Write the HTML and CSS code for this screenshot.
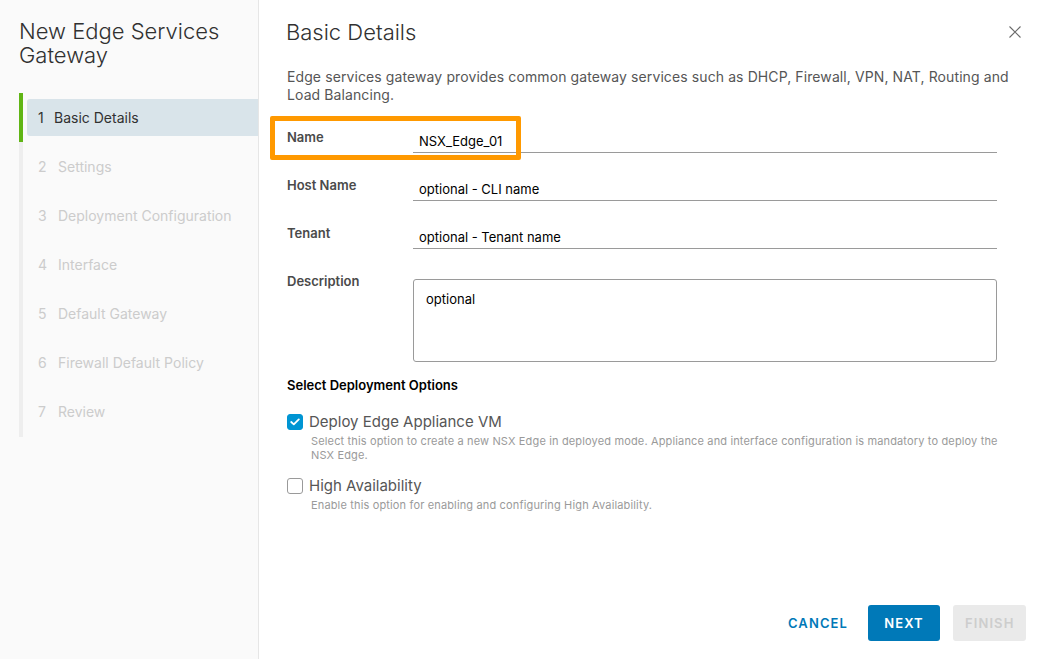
FILE: index.html
```html
<!DOCTYPE html>
<html>
<head>
<meta charset="utf-8">
<link rel="stylesheet" href="styles.css">
</head>
<body>
<div class="wizard">
  <aside class="sidebar">
    <h1 class="wiz-title">New Edge Services Gateway</h1>
    <ol class="steps">
      <li class="step active"><span class="num">1</span><span class="label">Basic Details</span></li>
      <li class="step"><span class="num">2</span><span class="label">Settings</span></li>
      <li class="step"><span class="num">3</span><span class="label">Deployment Configuration</span></li>
      <li class="step"><span class="num">4</span><span class="label">Interface</span></li>
      <li class="step"><span class="num">5</span><span class="label">Default Gateway</span></li>
      <li class="step"><span class="num">6</span><span class="label">Firewall Default Policy</span></li>
      <li class="step"><span class="num">7</span><span class="label">Review</span></li>
    </ol>
  </aside>
  <main class="content">
    <header class="content-head">
      <h2 class="page-title">Basic Details</h2>
      <button class="close" aria-label="Close">
        <svg width="12" height="12" viewBox="0 0 12 12"><path d="M0.5 0.5 L11.5 11.5 M11.5 0.5 L0.5 11.5" stroke="#6a6a6a" stroke-width="1.1" fill="none"/></svg>
      </button>
    </header>
    <p class="intro">Edge services gateway provides common gateway services such as DHCP, Firewall, VPN, NAT, Routing and Load Balancing.</p>
    <form class="form">
      <div class="row highlight-row">
        <label class="flabel">Name</label>
        <div class="field"><span class="input value">NSX_Edge_01</span></div>
        <div class="highlight"></div>
      </div>
      <div class="row">
        <label class="flabel">Host Name</label>
        <div class="field"><span class="input">optional - CLI name</span></div>
      </div>
      <div class="row">
        <label class="flabel">Tenant</label>
        <div class="field"><span class="input">optional - Tenant name</span></div>
      </div>
      <div class="row row-desc">
        <label class="flabel">Description</label>
        <div class="field"><div class="textarea">optional</div></div>
      </div>
      <h3 class="section">Select Deployment Options</h3>
      <div class="option">
        <span class="cb checked"><svg width="10" height="8" viewBox="0 0 10 8"><path d="M1.2 4 L3.8 6.4 L8.8 1.4" stroke="#fff" stroke-width="1.8" fill="none" stroke-linecap="round" stroke-linejoin="round"/></svg></span>
        <div class="opt-text">
          <div class="opt-label">Deploy Edge Appliance VM</div>
          <div class="opt-help">Select this option to create a new NSX Edge in deployed mode. Appliance and interface configuration is mandatory to deploy the NSX Edge.</div>
        </div>
      </div>
      <div class="option">
        <span class="cb"></span>
        <div class="opt-text">
          <div class="opt-label">High Availability</div>
          <div class="opt-help">Enable this option for enabling and configuring High Availability.</div>
        </div>
      </div>
    </form>
    <footer class="actions">
      <button class="btn btn-link">CANCEL</button>
      <button class="btn btn-primary">NEXT</button>
      <button class="btn btn-disabled">FINISH</button>
    </footer>
  </main>
</div>
</body>
</html>
```

FILE: styles.css
```css
* { box-sizing: border-box; }
html, body { margin: 0; padding: 0; }
body {
  width: 1046px;
  height: 659px;
  overflow: hidden;
  font-family: "Inter", "Open Sans", sans-serif;
  color: #565656;
  background: #fff;
}
.wizard {
  display: flex;
  height: 659px;
}
.sidebar {
  width: 259px;
  flex: none;
  background: #fafafa;
  border-right: 1px solid #e6e6e6;
  padding: 19px 0 0 19px;
}
.wiz-title {
  margin: 0;
  font-size: 22px;
  font-weight: 300;
  line-height: 24px;
  color: #313131;
}
.steps {
  list-style: none;
  margin: 26px 0 0 0;
  padding: 6px 0 0 4px;
  border-left: 4px solid #eeeeee;
  height: 344px;
  position: relative;
}
.steps::before {
  content: "";
  position: absolute;
  left: -4px;
  top: 0;
  width: 4px;
  height: 49px;
  background: #60b515;
}
.step {
  height: 37px;
  display: flex;
  align-items: center;
  font-size: 14px;
  color: #cccccc;
  border-radius: 3px 0 0 3px;
  padding-left: 11px;
}
.step + .step { margin-top: 12px; }
.step.active {
  background: #d9e4ea;
  color: #313131;
}
.step .num { width: 16px; }
.step:not(.active) .num { width: 20px; }
.content {
  flex: 1;
  min-width: 0;
  position: relative;
  padding: 19px 49px 0 27px;
}
.content-head {
  display: flex;
  justify-content: space-between;
  align-items: center;
  height: 26px;
}
.page-title {
  margin: 0;
  font-size: 22px;
  font-weight: 300;
  color: #313131;
}
.close {
  border: 0;
  background: none;
  padding: 0;
  margin-right: -24px;
  width: 12px;
  height: 12px;
  display: flex;
}
.intro {
  margin: 23px -26px 0 1px;
  font-size: 14px;
  line-height: 18px;
  letter-spacing: 0.1px;
  color: #565656;
}
.form { margin: 12px 0 0 1px; }
.row {
  display: flex;
  height: 48px;
  position: relative;
}
.flabel {
  width: 126px;
  flex: none;
  font-size: 13px;
  font-weight: 600;
  color: #4a4a4a;
  padding-top: 13px;
}
.field { flex: 1; }
.input {
  display: block;
  margin-top: 12px;
  height: 25px;
  border-bottom: 1px solid #9a9a9a;
  font-size: 13px;
  color: #000;
  padding: 5px 6px 0;
}
.highlight {
  position: absolute;
  left: -17px;
  top: 0;
  width: 251px;
  height: 44px;
  border: 5px solid #ff9900;
  border-radius: 2px;
  pointer-events: none;
}
.row-desc { height: 116px; }
.textarea {
  margin-top: 19px;
  height: 83px;
  border: 1px solid #9a9a9a;
  border-radius: 3px;
  font-size: 13px;
  color: #000;
  padding: 11px 12px;
}
.section {
  margin: 0;
  font-size: 13px;
  font-weight: 600;
  color: #000;
  line-height: 18px;
}
.option {
  display: flex;
  margin-top: 18px;
}
.option + .option { margin-top: 14px; }
.cb {
  width: 16px;
  height: 16px;
  flex: none;
  border: 1px solid #9a9a9a;
  border-radius: 3px;
  margin-top: 2px;
  margin-right: 6px;
  display: flex;
  align-items: center;
  justify-content: center;
  background: #fff;
}
.cb.checked {
  background: #0095d3;
  border-color: #0095d3;
}
.opt-text { flex: 1; min-width: 0; }
.opt-label {
  font-size: 15px;
  line-height: 20px;
  color: #565656;
}
.opt-help {
  margin: 2px -20px 0 0;
  font-size: 11px;
  line-height: 14px;
  letter-spacing: 0.15px;
  color: #9a9a9a;
  padding-left: 2px;
}
.actions {
  position: absolute;
  right: 20px;
  bottom: 18px;
  display: flex;
  gap: 13px;
  align-items: center;
}
.btn {
  font-family: inherit;
  height: 36px;
  border: 0;
  border-radius: 3px;
  font-size: 13px;
  font-weight: 600;
  letter-spacing: 1.1px;
  padding: 0 12px;
}
.btn-link {
  background: none;
  color: #0079b8;
  padding: 0;
  margin-right: 7px;
}
.btn-primary {
  background: #0079b8;
  color: #fff;
  width: 72px;
}
.btn-disabled {
  background: #eaeaea;
  color: #cdcdcd;
  width: 73px;
}
```
